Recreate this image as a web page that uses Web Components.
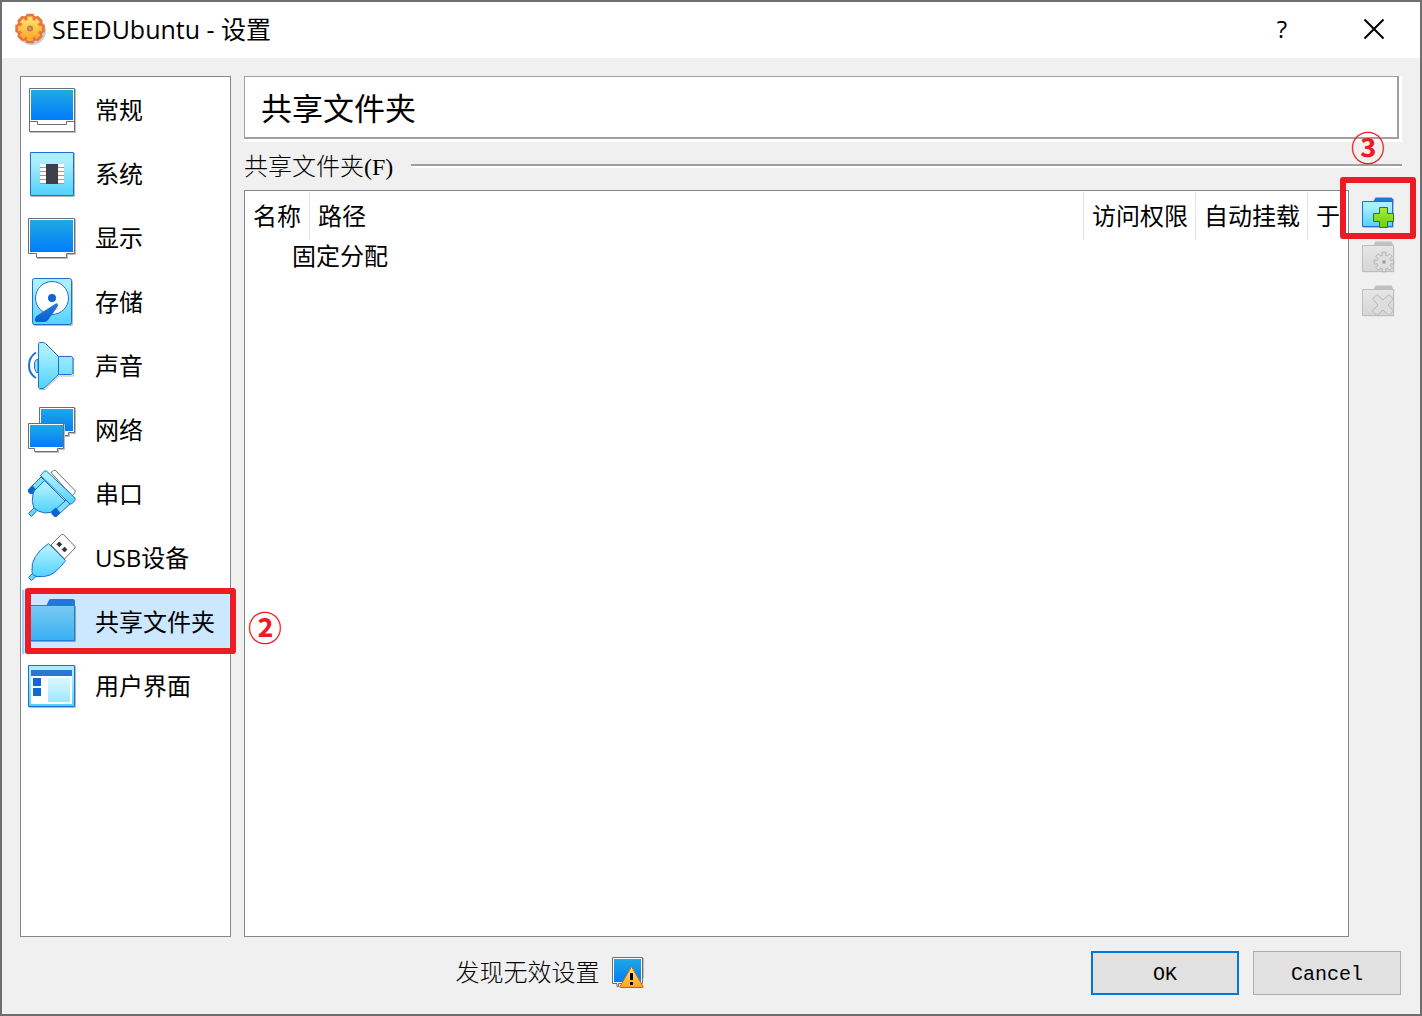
<!DOCTYPE html>
<html lang="zh-CN">
<head>
<meta charset="utf-8">
<title>SEEDUbuntu - 设置</title>
<style>
    body {
        margin: 0;
        --face: #f0f0f0;
        --edge: #828790;
        --mark: #ed1c24;
        --song: "Liberation Serif", "Noto Sans CJK SC", serif;
        font: 24px/32px "Open Sans", "Noto Sans CJK SC", sans-serif;
        color: #000;
    }
</style>
</head>
<body>
<settings-dialog></settings-dialog>

<script>
const GRADIENTS = `
    <defs>
        <linearGradient id="screen" x1="0" y1="0" x2="0" y2="1"><stop offset="0" stop-color="#20a9e2"/><stop offset="1" stop-color="#007dfc"/></linearGradient>
        <linearGradient id="light" x1="0" y1="0" x2="0" y2="1"><stop offset="0.2" stop-color="#aaefff"/><stop offset="1" stop-color="#50d2ff"/></linearGradient>
        <linearGradient id="blue" x1="0" y1="0" x2="0" y2="1"><stop offset="0" stop-color="#2f78d4"/><stop offset="1" stop-color="#0062d2"/></linearGradient>
        <linearGradient id="open" x1="0" y1="0" x2="0" y2="1"><stop offset="0" stop-color="#7ac9f1"/><stop offset="1" stop-color="#37b1f6"/></linearGradient>
        <linearGradient id="green" x1="0" y1="0" x2="0" y2="1"><stop offset="0" stop-color="#a8ea3c"/><stop offset="1" stop-color="#6cd00c"/></linearGradient>
        <linearGradient id="amber" x1="0" y1="0" x2="0" y2="1"><stop offset="0" stop-color="#ffe878"/><stop offset="1" stop-color="#ffa41c"/></linearGradient>
        <linearGradient id="grey" x1="0" y1="0" x2="0" y2="1"><stop offset="0" stop-color="#e6e6e6"/><stop offset="1" stop-color="#d6d6d6"/></linearGradient>
    </defs>`;

const GREY_FOLDER = `
    <path d="M11.5 4.5l2-4h16l2 4z" fill="#c0c0c0"/>
    <path d="M1 31h31V5" fill="none" stroke="#dedede"/>
    <path d="M0.5 4.5h31v26h-31z" fill="url(#grey)" stroke="#bdbdbd"/>`;

// outline of a wheel with eight teeth
function cog(cx, cy, outer, inner) {
    const points = [];

    for (let i = 0; i < 8; i++) {
        [[inner, -14], [outer, -12], [outer, 12], [inner, 14]].forEach(([r, offset]) => {
            const a = (i * 45 + offset) * Math.PI / 180;
            points.push(`${(cx + r * Math.cos(a)).toFixed(2)} ${(cy + r * Math.sin(a)).toFixed(2)}`);
        });
    }
    return `M${points.join('L')}z`;
}

// [size, markup]
const ICONS = {
    general: [48, `
        <path d="M2 46.500h45.500V3" fill="none" stroke="#bbb"/>
        <path d="M1.500 2.500h45v43h-45z" fill="#fff" stroke="#6e6e6e"/>
        <path d="M3 4h42v30H3z" fill="url(#screen)"/>
        <path d="M1.500 35.500h8v3h29v-3h8" fill="none" stroke="#6e6e6e"/>`],
    system: [48, `
        <path d="M3 46.500h43.500V3" fill="none" stroke="#bbb"/>
        <path d="M2.500 2.500h43v43h-43z" fill="url(#light)" stroke="#1f6ed2"/>
        <path d="M12 15.500h24M12 19.500h24M12 23.500h24M12 27.500h24M12 31.500h24" stroke="#fff" stroke-width="3"/>
        <path d="M12 17.500h24M12 21.500h24M12 25.500h24M12 29.500h24M12 33.500h24" stroke="#5fa9dc"/>
        <path d="M18 14h12v20H18z" fill="#3a3f4a"/>`],
    display: [48, `
        <path d="M9 44.500h30.500v-4h8V5" fill="none" stroke="#bbb"/>
        <path d="M0.500 4.500h46v35h-8v4h-30v-4h-8z" fill="#fff" stroke="#6e6e6e"/>
        <path d="M2 6h43v32H2z" fill="url(#screen)"/>`],
    storage: [48, `
        <rect x="5" y="2" width="40" height="46" rx="2" fill="#bbb"/>
        <rect x="4.500" y="0.500" width="39" height="46" rx="2" fill="url(#light)" stroke="#1f6ed2"/>
        <circle cx="24" cy="20" r="16.500" fill="#fff" stroke="#1f6ed2"/>
        <circle cx="24" cy="20" r="4" fill="#1265d2"/>
        <path d="M27 26q2-1.500 2.800 0t-1 4L20 42q-1.500 2-4 2H9q-2.500 0-2-3 .5-3 3-4z" fill="url(#blue)"/>`],
    audio: [48, `
        <path d="M11 47.500h6l14-13.500h14.500V16" fill="none" stroke="#bbb"/>
        <path d="M10 17.500H8.500l-2 3v6l2 4H10z" fill="#8ce4ff" stroke="#1f6ed2"/>
        <path d="M8 10.500Q1 15 1 23.500T8 36" fill="none" stroke="#1f6ed2" stroke-width="2"/>
        <path d="M10.500 1.500l1-1h4l2 1L30.500 14.500h13l1.500 1.500v15l-1.500 1.500h-13L17.500 45l-2 1.500h-4l-1-1z" fill="url(#light)" stroke="#1f6ed2"/>
        <path d="M30.500 14.500v18" stroke="#1f6ed2"/>`],
    network: [48, `
        <path d="M37 30.500h4.500v-3h6V2" fill="none" stroke="#bbb"/>
        <path d="M11.500 1.500h35v25h-6v3h-22v-3h-7z" fill="#fff" stroke="#6e6e6e"/>
        <path d="M13 3h32v22H13z" fill="url(#screen)"/>
        <path d="M7 46.500h23.500v-3h6V18" fill="none" stroke="#bbb"/>
        <path d="M0.500 17.500h35v25h-6v3h-23v-3h-6z" fill="#fff" stroke="#6e6e6e"/>
        <path d="M2 19h33v22H2z" fill="url(#screen)"/>`],
    serial: [48, `
        <path d="M23 2.500L25.500 .5h2L47 20.500v2L44 26z" fill="#fff" stroke="#6e6e6e"/>
        <path d="M0.500 43.500l6-6 2.500 3-5.500 6z" fill="#66d8ff" stroke="#1f6ed2"/>
        <path d="M13 7l4 4L6 22l-4-4z" fill="#7fdfff" stroke="#1f6ed2"/>
        <path d="M0 19.500L4.500 15.500 8.500 20l-3 4H2L0 22z" fill="#0f63cf"/>
        <path d="M16.500 10.500L37 31l-9 9q-4 3-11 3-7-1-11-5-3-6-1-14 1-4 4-6z" fill="url(#light)" stroke="#1f6ed2"/>
        <path d="M38 30l4 4-11 10-4-4z" fill="#7fdfff" stroke="#1f6ed2"/>
        <path d="M23.500 41l4.500-3.500 4.500 5.500-4 4h-2l-3-3z" fill="#0f63cf"/>
        <path d="M12.500 5.500l4-4.500h2L47 28v2.500L43.500 34H42z" fill="url(#light)" stroke="#1f6ed2"/>`],
    usb: [48, `
        <path d="M23 11L33.500.5h2l11.500 12v1.500L36.500 25z" fill="#fff" stroke="#6e6e6e"/>
        <path d="M29 10.300l2.300-2.300 2.400 2.300-2.400 2.400zM34.200 15.500l2.300-2.300 2.400 2.300-2.400 2.400z" fill="#333" stroke="#333"/>
        <path d="M0.500 43.500l5-5 3.500 3-5.500 5z" fill="#66d8ff" stroke="#1f6ed2"/>
        <path d="M20.500 9.500l17 17Q29 38 22 41q-6 2.500-13 1.500-5-1-5-5Q3 29 7.500 22.500 12 15 20.500 9.500z" fill="url(#light)" stroke="#1f6ed2"/>`],
    folders: [48, `
        <path d="M1 43.500h46.500V8" fill="none" stroke="#8aa"/>
        <path d="M18 8l3-6q.5-1 2-1h22q2 0 2 2v5z" fill="#2277d8"/>
        <path d="M0.500 7.500h46v35h-46z" fill="url(#open)" stroke="#1f7edc"/>`],
    interface: [48, `
        <path d="M1 45.500h46.500V4" fill="none" stroke="#bbb"/>
        <path d="M0.500 3.500h46v41h-46z" fill="url(#light)" stroke="#1f6ed2"/>
        <path d="M3 14h41v28H3z" fill="#fff"/>
        <path d="M3 8h41v6H3z" fill="#2f74d0"/>
        <path d="M5 16h8v8H5zM5 26h8v8H5z" fill="#1268d4"/>
        <path d="M20 16h22v24H20z" fill="url(#light)" opacity=".55"/>`],
    add: [32, `
        <path d="M11 5l2.500-4.500h16l2 2V5z" fill="#2874d3"/>
        <path d="M1 30.500h30.500V5" fill="none" stroke="#bbb"/>
        <path d="M0.500 4.500h30v25h-30z" fill="url(#light)" stroke="#1f6ed2"/>
        <path d="M17.500 10.500h8v6h6v8h-6v6h-8v-6h-6v-8h6z" fill="url(#green)" stroke="#30780c"/>`],
    edit: [32, GREY_FOLDER + `
        <path d="${cog(22, 21, 10, 7)}" fill="#dedede" stroke="#b6b6b6"/>
        <circle cx="22" cy="21" r="2" fill="#a8a8a8"/>`],
    remove: [32, GREY_FOLDER + `
        <path d="M15 9.500l6 5.500 6-5.500 4.500 4.500-5.500 6 5.500 6-4.500 4.500-6-5.500-6 5.500-4.500-4.500 5.500-6-5.500-6z" fill="#dedede" stroke="#b6b6b6"/>`],
    warning: [32, `
        <path d="M0.500 0.500h30v26h-24v3h-1.500v-3h-4.500z" fill="#fff" stroke="#6e6e6e"/>
        <path d="M31.500 1v20" stroke="#bbb"/>
        <path d="M2 2h27v23H2z" fill="url(#screen)"/>
        <path d="M19.500 9.500L31 29.500q.5 1-.5 1h-22q-1 0-.5-1z" fill="url(#amber)" stroke="#d0600c" stroke-linejoin="round"/>
        <path d="M19.500 16v7M19.500 25v3" stroke="#000" stroke-width="3"/>`],
    gear: [32, `
        <circle cx="18" cy="17" r="14" fill="#999" opacity=".5"/>
        <path d="${cog(16, 14.5, 14, 12.5)}" fill="#e8743a" stroke="#e8743a" stroke-width="2" stroke-linejoin="round"/>
        <path d="${cog(16, 14.5, 12, 9)}" fill="url(#amber)" stroke="#fdb04a" stroke-linejoin="round"/>
        <circle cx="16" cy="14.500" r="3" fill="#c87840"/>
        <circle cx="16" cy="14.500" r="1.500" fill="#b8a080"/>`],
    close: [20, `<path d="M.5.5l19 19M19.500.5l-19 19" stroke="#000" stroke-width="2"/>`],
};

class SettingsIcon extends HTMLElement {
    connectedCallback() {
        const [size, markup] = ICONS[this.getAttribute('name')];

        this.attachShadow({ mode: 'open' });
        this.shadowRoot.innerHTML = `
            <style>
                :host { display: block; flex: none; }
                svg { display: block; overflow: visible; }
            </style>
            <svg width="${size}" height="${size}" viewBox="0 0 ${size} ${size}" aria-hidden="true">${GRADIENTS}${markup}</svg>
        `;
    }
}

// circled number that goes with a marked area
class StepNumber extends HTMLElement {
    constructor() {
        super();
        this.attachShadow({ mode: 'open' });
        this.shadowRoot.innerHTML = `
            <style>
                :host {
                    position: absolute;
                    z-index: 3;
                    font: bold 34px/34px "Noto Sans CJK SC", sans-serif;
                    color: var(--mark);
                }
            </style>
            <slot></slot>
        `;
    }
}

class TitleBar extends HTMLElement {
    constructor() {
        super();
        this.attachShadow({ mode: 'open' });
        this.shadowRoot.innerHTML = `
            <style>
                :host {
                    display: flex;
                    align-items: center;
                    height: 56px;
                    padding-left: 12px;
                    background: #fff;
                }
                h1 {
                    flex: 1;
                    margin: 0 0 0 6px;
                    padding-bottom: 2px;
                    font: inherit;
                    font-size: 25px;
                }
                button {
                    display: grid;
                    place-items: center;
                    width: 92px;
                    height: 56px;
                    padding: 0 0 2px;
                    border: 0;
                    background: none;
                    font: inherit;
                    color: inherit;
                }
            </style>
            <settings-icon name="gear"></settings-icon>
            <h1><slot></slot></h1>
            <button type="button">?</button>
            <button type="button" aria-label="Close"><settings-icon name="close"></settings-icon></button>
        `;
    }
}

class NavItem extends HTMLElement {
    connectedCallback() {
        this.attachShadow({ mode: 'open' });
        this.shadowRoot.innerHTML = `
            <style>
                :host {
                    display: block;
                    position: relative;
                }
                a {
                    display: flex;
                    align-items: center;
                    gap: 19px;
                    height: 64px;
                    padding-left: 6px;
                    color: inherit;
                    text-decoration: none;
                }
                :host([selected]) a {
                    background: #cce8ff;
                    box-shadow: inset 2px 0 #99d1ff;
                }
                .frame {
                    position: absolute;
                    z-index: 2;
                    inset: -2px -6px 0 3px;
                    border: 6px solid var(--mark);
                    border-radius: 3px;
                    pointer-events: none;
                }
                step-number {
                    top: 20px;
                    left: 226px;
                }
            </style>
            <a href="#"><settings-icon name="${this.getAttribute('icon')}"></settings-icon><slot></slot></a>
        `;

        if (this.hasAttribute('step')) {
            this.shadowRoot.innerHTML += `<div class="frame"></div><step-number>${this.getAttribute('step')}</step-number>`;
        }
    }
}

class SettingsNav extends HTMLElement {
    constructor() {
        super();
        this.attachShadow({ mode: 'open' });
        this.shadowRoot.innerHTML = `
            <style>
                :host {
                    display: block;
                    padding: 1px 0 1px 1px;
                    border: 1px solid var(--edge);
                    background: #fff;
                }
            </style>
            <nav><slot></slot></nav>
        `;
    }
}

class PageHeader extends HTMLElement {
    constructor() {
        super();
        this.attachShadow({ mode: 'open' });
        this.shadowRoot.innerHTML = `
            <style>
                :host {
                    display: block;
                    padding: 0 3px 3px 0;
                    background: #fff;
                }
                h2 {
                    margin: 0;
                    padding: 15px 16px 9px;
                    border: solid #a0a0a0;
                    border-width: 1px 2px 2px 1px;
                    background: #fff;
                    font: 31px/36px var(--song);
                }
            </style>
            <h2><slot></slot></h2>
        `;
    }
}

class GroupTitle extends HTMLElement {
    constructor() {
        super();
        this.attachShadow({ mode: 'open' });
        this.shadowRoot.innerHTML = `
            <style>
                :host {
                    display: flex;
                    align-items: center;
                    gap: 18px;
                    height: 48px;
                    font-family: var(--song);
                    font-weight: 300;
                }
                :host::after {
                    content: "";
                    flex: 1;
                    height: 2px;
                    background: #a0a0a0;
                    border-bottom: 2px solid #fff;
                }
                span { padding-top: 2px; }
            </style>
            <span><slot></slot></span>
        `;
    }
}

class ShareTable extends HTMLElement {
    constructor() {
        super();
        this.attachShadow({ mode: 'open' });
        this.shadowRoot.innerHTML = `
            <style>
                :host {
                    display: block;
                    flex: 1;
                    min-width: 0;
                    padding-top: 1px;
                    border: 1px solid var(--edge);
                    background: #fff;
                }
                table {
                    width: 100%;
                    table-layout: fixed;
                    border-collapse: separate;
                    border-spacing: 0;
                }
                th, td {
                    padding: 0 0 0 8px;
                    font-weight: normal;
                    text-align: left;
                    white-space: nowrap;
                    overflow: hidden;
                }
                th {
                    height: 48px;
                    border-right: 1px solid #e5e5e5;
                    box-sizing: border-box;
                }
                th:last-child { border: 0; }
                td {
                    height: 32px;
                    padding-left: 47px;
                }
                .name { width: 65px; }
                .flag { width: 112px; }
                .at { width: 40px; }
            </style>
            <table>
                <thead>
                    <tr>
                        <th class="name">名称</th>
                        <th>路径</th>
                        <th class="flag">访问权限</th>
                        <th class="flag">自动挂载</th>
                        <th class="at">于</th>
                    </tr>
                </thead>
                <tbody>
                    <tr><td colspan="5">固定分配</td></tr>
                </tbody>
            </table>
        `;
    }
}

class ShareToolbar extends HTMLElement {
    constructor() {
        super();
        this.attachShadow({ mode: 'open' });
        this.shadowRoot.innerHTML = `
            <style>
                :host {
                    display: flex;
                    flex-direction: column;
                    gap: 12px;
                    padding: 7px 8px 0 13px;
                }
                .tool { position: relative; }
                button {
                    display: block;
                    padding: 0;
                    border: 0;
                    background: none;
                }
                .frame {
                    position: absolute;
                    z-index: 2;
                    inset: -20px -22px -10px;
                    border: 6px solid var(--mark);
                    border-radius: 3px;
                    pointer-events: none;
                }
                step-number {
                    top: -67px;
                    left: -11px;
                }
            </style>
            <div class="tool">
                <button type="button" aria-label="Add"><settings-icon name="add"></settings-icon></button>
                <div class="frame"></div>
                <step-number>③</step-number>
            </div>
            <button type="button" aria-label="Edit" disabled><settings-icon name="edit"></settings-icon></button>
            <button type="button" aria-label="Remove" disabled><settings-icon name="remove"></settings-icon></button>
        `;
    }
}

class DialogFooter extends HTMLElement {
    constructor() {
        super();
        this.attachShadow({ mode: 'open' });
        this.shadowRoot.innerHTML = `
            <style>
                :host {
                    display: flex;
                    align-items: center;
                    gap: 14px;
                    padding: 14px 19px 19px 20px;
                    font-family: var(--song);
                    font-weight: 300;
                }
                .status {
                    flex: 1;
                    display: flex;
                    align-items: center;
                    justify-content: center;
                    gap: 12px;
                }
                button {
                    width: 148px;
                    height: 44px;
                    padding: 4px 0 0;
                    border: 1px solid #adadad;
                    background: #e1e1e1;
                    font: 20px/24px "Liberation Mono", monospace;
                    color: inherit;
                }
                .default { border: 2px solid #0078d7; }
            </style>
            <div class="status"><span>发现无效设置</span><settings-icon name="warning"></settings-icon></div>
            <button type="button" class="default">OK</button>
            <button type="button">Cancel</button>
        `;
    }
}

class SettingsDialog extends HTMLElement {
    constructor() {
        super();
        this.attachShadow({ mode: 'open' });
        this.shadowRoot.innerHTML = `
            <style>
                :host {
                    display: flex;
                    flex-direction: column;
                    box-sizing: border-box;
                    min-height: 100vh;
                    border: 2px solid #6e6e6e;
                    background: var(--face);
                }
                .content {
                    flex: 1;
                    display: grid;
                    grid-template-columns: 211px 1fr;
                    gap: 13px;
                    padding: 18px 18px 0;
                }
                main {
                    display: flex;
                    flex-direction: column;
                    min-width: 0;
                }
                .shares {
                    flex: 1;
                    display: flex;
                }
            </style>
            <title-bar>SEEDUbuntu - 设置</title-bar>
            <div class="content">
                <settings-nav>
                    <nav-item icon="general">常规</nav-item>
                    <nav-item icon="system">系统</nav-item>
                    <nav-item icon="display">显示</nav-item>
                    <nav-item icon="storage">存储</nav-item>
                    <nav-item icon="audio">声音</nav-item>
                    <nav-item icon="network">网络</nav-item>
                    <nav-item icon="serial">串口</nav-item>
                    <nav-item icon="usb">USB设备</nav-item>
                    <nav-item icon="folders" step="②" selected>共享文件夹</nav-item>
                    <nav-item icon="interface">用户界面</nav-item>
                </settings-nav>
                <main>
                    <page-header>共享文件夹</page-header>
                    <group-title>共享文件夹(F)</group-title>
                    <div class="shares">
                        <share-table></share-table>
                        <share-toolbar></share-toolbar>
                    </div>
                </main>
            </div>
            <dialog-footer></dialog-footer>
        `;
    }
}

customElements.define('settings-icon', SettingsIcon);
customElements.define('step-number', StepNumber);
customElements.define('title-bar', TitleBar);
customElements.define('nav-item', NavItem);
customElements.define('settings-nav', SettingsNav);
customElements.define('page-header', PageHeader);
customElements.define('group-title', GroupTitle);
customElements.define('share-table', ShareTable);
customElements.define('share-toolbar', ShareToolbar);
customElements.define('dialog-footer', DialogFooter);
customElements.define('settings-dialog', SettingsDialog);
</script>
</body>
</html>
